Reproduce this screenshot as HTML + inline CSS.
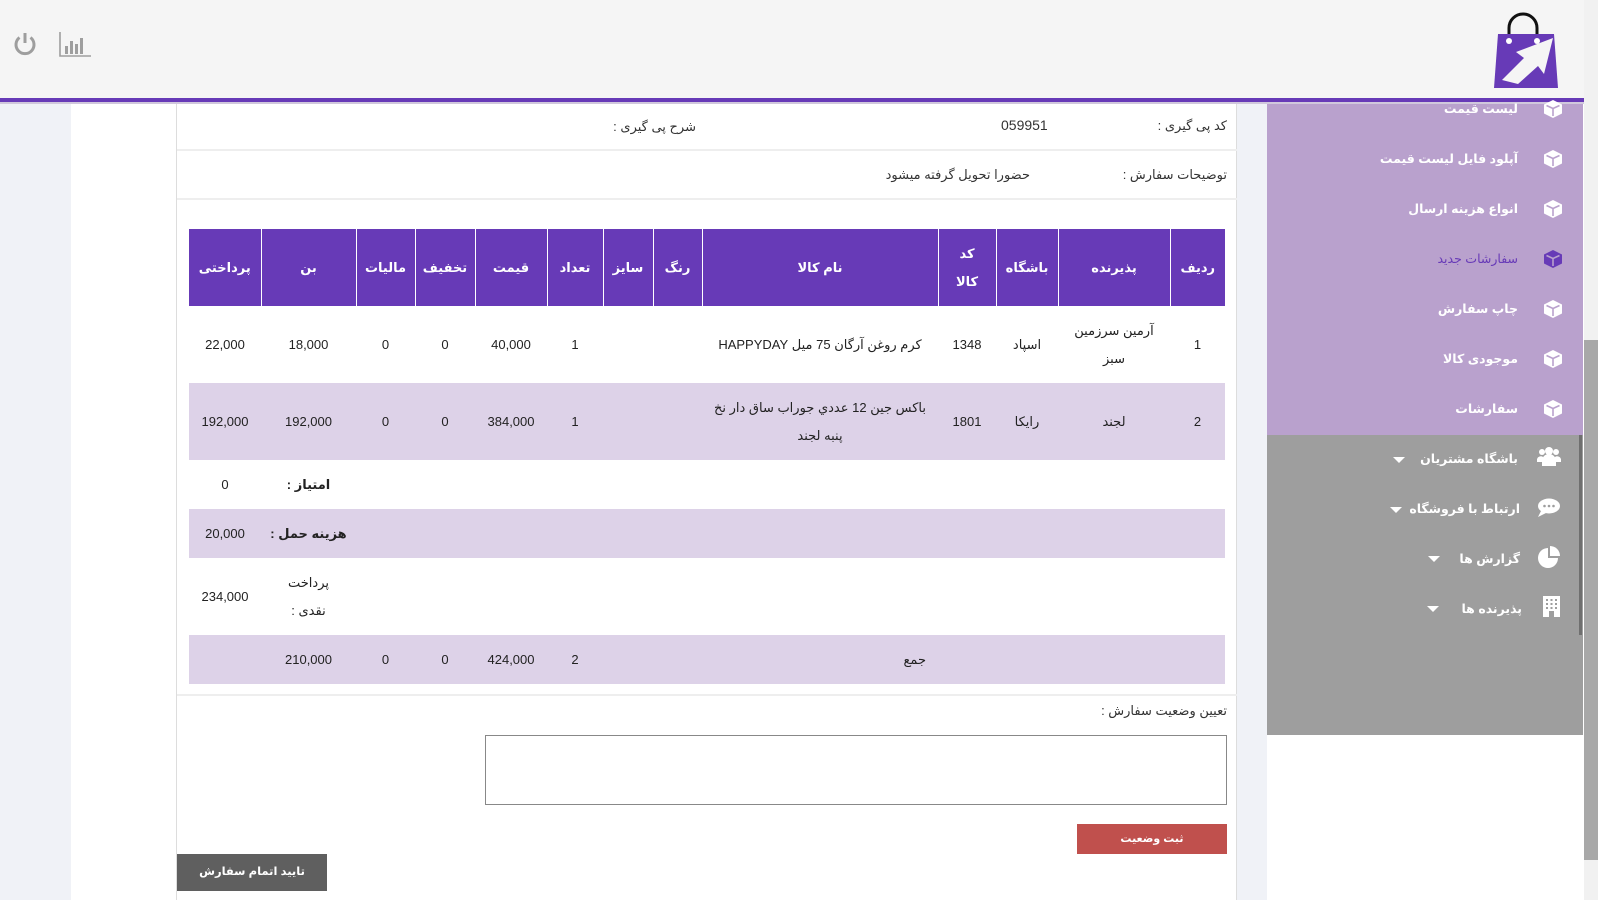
<!DOCTYPE html>
<html><head><meta charset="utf-8">
<style>
*{margin:0;padding:0;box-sizing:border-box}
body{width:1598px;height:900px;overflow:hidden;background:#fff;font-family:"Liberation Sans","DejaVu Sans",sans-serif;color:#333;position:relative}
.abs{position:absolute}
.hdr{left:0;top:0;width:1584px;height:98px;background:#f5f5f5}
.pline{left:0;top:98px;width:1584px;height:4px;background:#673ab7}
.pline2{left:0;top:102px;width:1584px;height:2px;background:#d0c8dc}
.strip{background:#f0f2f7}
.card{left:176px;top:104px;width:1061px;height:796px;border-left:1px solid #ddd;border-right:1px solid #ddd;background:#fff}
.hl{height:2px;background:#eee;left:177px;width:1060px}
.t{font-size:13px;white-space:nowrap;direction:rtl}
table{position:absolute;left:189px;top:229px;border-collapse:collapse;direction:rtl;table-layout:fixed;width:1036px;font-size:13px}
th{background:#673ab7;color:#fff;font-weight:bold;height:77px;border-left:1px solid #fff;text-align:center;font-size:13px;line-height:28px}
th:last-child{border-left:none}
td{text-align:center;color:#222;line-height:28px}
tr.r td{height:77px}
tr.l td{background:#ddd2e8}
tr.s td{height:49px}
.side{left:1267px;top:104px;width:316px;height:331px;background:#b9a1cd}
.side2{left:1267px;top:435px;width:316px;height:300px;background:#9e9e9e}
.mi{position:absolute;right:80px;font-size:12.5px;font-weight:bold;color:#fff;direction:rtl;white-space:nowrap}
.caret{position:absolute;width:0;height:0;border-left:6px solid transparent;border-right:6px solid transparent;border-top:6px solid #fff}
</style></head><body>
<div class="abs strip" style="left:0;top:98px;width:71px;height:802px"></div>
<div class="abs strip" style="left:1237px;top:98px;width:30px;height:802px"></div>
<div class="abs card"></div>
<div class="abs hdr"></div>
<div class="abs pline"></div>
<div class="abs pline2"></div>
<div class="abs" style="left:1584px;top:0;width:14px;height:900px;background:#f1f1f1"></div>
<div class="abs" style="left:1584px;top:340px;width:14px;height:520px;background:#a8a8a8"></div>

<svg class="abs" style="left:12px;top:31px" width="26" height="26" viewBox="0 0 26 26"><path d="M7.5 6.5A9 9 0 1 0 18.5 6.5" fill="none" stroke="#9e9e9e" stroke-width="3"/><path d="M13 2v10" stroke="#9e9e9e" stroke-width="3"/></svg>
<svg class="abs" style="left:59px;top:32px" width="32" height="25" viewBox="0 0 32 25"><path d="M1 0v24h31" fill="none" stroke="#9e9e9e" stroke-width="1.6"/><rect x="6" y="14" width="3" height="8" fill="#9e9e9e"/><rect x="11" y="9" width="3" height="13" fill="#9e9e9e"/><rect x="16" y="12" width="3" height="10" fill="#9e9e9e"/><rect x="21" y="6" width="3" height="16" fill="#9e9e9e"/></svg>

<svg class="abs" style="left:1491px;top:8px" width="72" height="82" viewBox="0 0 72 82"><path d="M18 34V20a14 14 0 0 1 28 0v14" fill="none" stroke="#111" stroke-width="3"/><path d="M7 26h56l4 54H3z" fill="#673ab7"/><circle cx="18" cy="33" r="3" fill="#fff"/><circle cx="46" cy="33" r="3" fill="#fff"/><path d="M11 72l22-22-8-6 37-14-9 36-6-8-20 18z" fill="#f5f5f5"/></svg>

<div class="abs t" style="right:371px;top:118px">کد پی گیری :</div>
<div class="abs t" style="left:1001px;top:117px;font-size:14px">059951</div>
<div class="abs t" style="right:902px;top:119px">شرح پی گیری :</div>
<div class="abs hl" style="top:149px"></div>
<div class="abs t" style="right:371px;top:167px">توضیحات سفارش :</div>
<div class="abs t" style="right:568px;top:167px">حضورا تحویل گرفته میشود</div>
<div class="abs hl" style="top:198px"></div>

<table>
<colgroup><col style="width:55px"><col style="width:112px"><col style="width:62px"><col style="width:58px"><col style="width:236px"><col style="width:49px"><col style="width:50px"><col style="width:56px"><col style="width:72px"><col style="width:60px"><col style="width:59px"><col style="width:95px"><col style="width:72px"></colgroup>
<tr><th>ردیف</th><th>پذیرنده</th><th>باشگاه</th><th>کد<br>کالا</th><th>نام کالا</th><th>رنگ</th><th>سایز</th><th>تعداد</th><th>قیمت</th><th>تخفیف</th><th>مالیات</th><th>بن</th><th>پرداختی</th></tr>
<tr class="r"><td>1</td><td>آرمین سرزمین<br>سبز</td><td>اسپاد</td><td>1348</td><td>کرم روغن آرگان 75 میل HAPPYDAY</td><td></td><td></td><td>1</td><td>40,000</td><td>0</td><td>0</td><td>18,000</td><td>22,000</td></tr>
<tr class="r l"><td>2</td><td>لجند</td><td>رایکا</td><td>1801</td><td>باکس جین 12 عددي جوراب ساق دار نخ<br>پنبه لجند</td><td></td><td></td><td>1</td><td>384,000</td><td>0</td><td>0</td><td>192,000</td><td>192,000</td></tr>
<tr class="s"><td colspan="11"></td><td><b>امتیاز :</b></td><td>0</td></tr>
<tr class="s l"><td colspan="11"></td><td><b>هزینه حمل :</b></td><td>20,000</td></tr>
<tr><td colspan="11" style="height:77px"></td><td>پرداخت<br>نقدی :</td><td>234,000</td></tr>
<tr class="s l"><td colspan="4"></td><td style="text-align:right;padding-right:12px">جمع</td><td></td><td></td><td>2</td><td>424,000</td><td>0</td><td>0</td><td>210,000</td><td></td></tr>
</table>

<div class="abs hl" style="top:694px"></div>
<div class="abs t" style="right:371px;top:703px">تعیین وضعیت سفارش :</div>
<div class="abs" style="left:485px;top:735px;width:742px;height:70px;border:1px solid #888"></div>
<div class="abs t" style="left:1077px;top:824px;width:150px;height:30px;background:#c0504d;color:#fff;font-size:11px;font-weight:bold;text-align:center;line-height:30px">ثبت وضعیت</div>
<div class="abs t" style="left:177px;top:854px;width:150px;height:37px;background:#5f5f5f;color:#fff;font-size:11.5px;font-weight:bold;text-align:center;line-height:37px">تایید اتمام سفارش</div>

<div class="abs side"></div>
<div class="abs side2"></div>
<div class="abs" style="left:1579px;top:435px;width:3px;height:200px;background:#6f6f6f"></div>
<div class="abs" style="left:1267px;top:0;width:316px;height:900px">
 <div class="mi" style="right:65px;top:101px">لیست قیمت</div>
 <div class="mi" style="right:65px;top:151px">آپلود فایل لیست قیمت</div>
 <div class="mi" style="right:65px;top:201px">انواع هزینه ارسال</div>
 <div class="mi" style="right:65px;top:251px;color:#673ab7;font-weight:normal">سفارشات جدید</div>
 <div class="mi" style="right:65px;top:301px">چاپ سفارش</div>
 <div class="mi" style="right:65px;top:351px">موجودی کالا</div>
 <div class="mi" style="right:65px;top:401px">سفارشات</div>
 <div class="mi" style="right:65px;top:451px">باشگاه مشتریان</div>
 <div class="mi" style="right:63px;top:501px">ارتباط با فروشگاه</div>
 <div class="mi" style="right:63px;top:551px">گزارش ها</div>
 <div class="mi" style="right:61px;top:601px">پذیرنده ها</div>
 <div class="caret" style="left:126px;top:457px"></div>
 <div class="caret" style="left:123px;top:507px"></div>
 <div class="caret" style="left:161px;top:556px"></div>
 <div class="caret" style="left:160px;top:606px"></div>
</div>
<svg class="abs" style="left:0;top:0" width="1598" height="900">
 <defs><g id="cube"><path d="M10 1l9 4.5v9L10 19 1 14.5v-9z" fill="#fff"/><path d="M3.5 6.5L10 9.5l6.5-3M10 9.5v7.5" fill="none" stroke="#b9a1cd" stroke-width="1.6"/></g></defs>
 <g transform="translate(1543,99)"><use href="#cube"/></g>
 <g transform="translate(1543,149)"><use href="#cube"/></g>
 <g transform="translate(1543,199)"><use href="#cube"/></g>
 <g transform="translate(1543,249)"><path d="M10 1l9 4.5v9L10 19 1 14.5v-9z" fill="#673ab7"/><path d="M3.5 6.5L10 9.5l6.5-3M10 9.5v7.5" fill="none" stroke="#b9a1cd" stroke-width="1.6"/></g>
 <g transform="translate(1543,299)"><use href="#cube"/></g>
 <g transform="translate(1543,349)"><use href="#cube"/></g>
 <g transform="translate(1543,399)"><use href="#cube"/></g>
 <g transform="translate(1537,446)" fill="#fff"><circle cx="12" cy="5" r="4"/><circle cx="5" cy="6" r="3"/><circle cx="19" cy="6" r="3"/><path d="M5 20v-5a7 7 0 0 1 14 0v5z"/><path d="M0 16v-3a4 4 0 0 1 6-2v5zM24 16v-3a4 4 0 0 0-6-2v5z"/></g>
 <g transform="translate(1537,498)" fill="#fff"><ellipse cx="12" cy="8" rx="11" ry="7.5"/><path d="M4 13l-3 6 8-4z"/><circle cx="7.5" cy="8" r="1.3" fill="#9e9e9e"/><circle cx="12" cy="8" r="1.3" fill="#9e9e9e"/><circle cx="16.5" cy="8" r="1.3" fill="#9e9e9e"/></g>
 <g transform="translate(1538,546)" fill="#fff"><path d="M10 2a10 10 0 1 0 10 10H10z"/><path d="M12 0v10h10A10 10 0 0 0 12 0z"/></g>
 <g transform="translate(1543,596)"><rect x="0" y="0" width="17" height="21" fill="#fff"/><g fill="#9e9e9e"><rect x="3" y="3" width="2" height="2"/><rect x="7.5" y="3" width="2" height="2"/><rect x="12" y="3" width="2" height="2"/><rect x="3" y="7" width="2" height="2"/><rect x="7.5" y="7" width="2" height="2"/><rect x="12" y="7" width="2" height="2"/><rect x="3" y="11" width="2" height="2"/><rect x="7.5" y="11" width="2" height="2"/><rect x="12" y="11" width="2" height="2"/><rect x="6" y="15" width="5" height="6"/></g></g>
</svg>
</body></html>
